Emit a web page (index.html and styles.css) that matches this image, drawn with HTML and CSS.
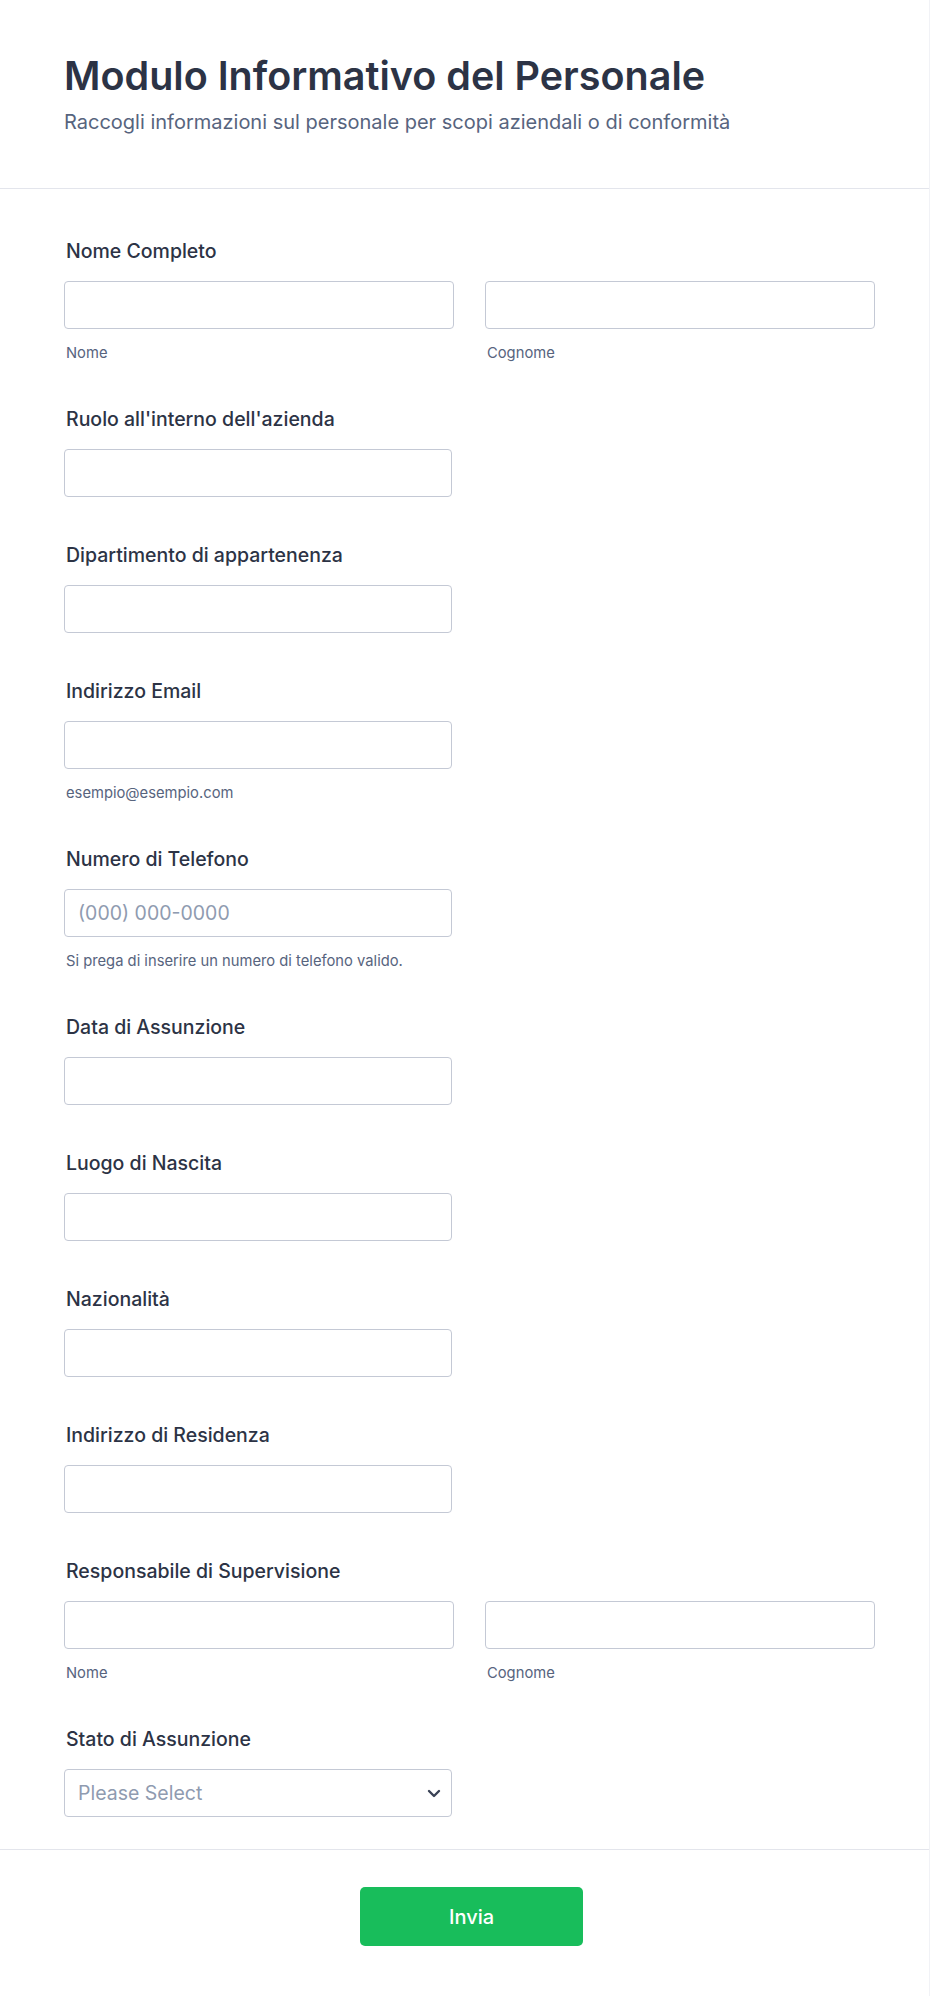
FILE: index.html
```html
<!DOCTYPE html>
<html lang="it">
<head>
<meta charset="utf-8">
<title>Modulo Informativo del Personale</title>
<link rel="stylesheet" href="styles.css">
</head>
<body>
<form class="card">
  <header class="header">
    <h1 class="title">Modulo Informativo del Personale</h1>
    <p class="subtitle">Raccogli informazioni sul personale per scopi aziendali o di conformità</p>
  </header>
  <ul class="fields">
    <li class="field">
      <label class="label">Nome Completo</label>
      <div class="pair">
        <div class="col"><input class="input" type="text"><span class="sub">Nome</span></div>
        <div class="col"><input class="input" type="text"><span class="sub">Cognome</span></div>
      </div>
    </li>
    <li class="field">
      <label class="label">Ruolo all'interno dell'azienda</label>
      <input class="input single" type="text">
    </li>
    <li class="field">
      <label class="label">Dipartimento di appartenenza</label>
      <input class="input single" type="text">
    </li>
    <li class="field">
      <label class="label">Indirizzo Email</label>
      <input class="input single" type="email">
      <span class="sub">esempio@esempio.com</span>
    </li>
    <li class="field">
      <label class="label">Numero di Telefono</label>
      <input class="input single" type="tel" placeholder="(000) 000-0000">
      <span class="sub">Si prega di inserire un numero di telefono valido.</span>
    </li>
    <li class="field">
      <label class="label">Data di Assunzione</label>
      <input class="input single" type="text">
    </li>
    <li class="field">
      <label class="label">Luogo di Nascita</label>
      <input class="input single" type="text">
    </li>
    <li class="field">
      <label class="label">Nazionalità</label>
      <input class="input single" type="text">
    </li>
    <li class="field">
      <label class="label">Indirizzo di Residenza</label>
      <input class="input single" type="text">
    </li>
    <li class="field">
      <label class="label">Responsabile di Supervisione</label>
      <div class="pair">
        <div class="col"><input class="input" type="text"><span class="sub">Nome</span></div>
        <div class="col"><input class="input" type="text"><span class="sub">Cognome</span></div>
      </div>
    </li>
    <li class="field">
      <label class="label">Stato di Assunzione</label>
      <div class="select single">
        <span class="select-text">Please Select</span>
        <svg class="chevron" width="14" height="9" viewBox="0 0 14 9"><polyline points="2,2 7,7 12,2" fill="none" stroke="#3a4255" stroke-width="2.4" stroke-linecap="round" stroke-linejoin="round"/></svg>
      </div>
    </li>
  </ul>
  <footer class="footer">
    <button class="submit" type="button">Invia</button>
  </footer>
</form>
</body>
</html>
```
FILE: styles.css
```css
html, body {
  margin: 0;
  padding: 0;
  background: #ffffff;
}
body {
  font-family: Inter, "Noto Sans", "Liberation Sans", sans-serif;
  color: #2c3345;
}
.card {
  width: 929px;
  min-height: 1996px;
  border-right: 1px solid #f1f2f6;
  background: #ffffff;
}
.header {
  padding: 52px 64px 54px;
  border-bottom: 1px solid #e3e5ec;
}
.title {
  margin: 0 0 10px;
  font-size: 39.5px;
  line-height: 48px;
  font-weight: 600;
  color: #2c3345;
}
.subtitle {
  margin: 0;
  font-size: 20px;
  line-height: 24px;
  color: #57647e;
}
.fields {
  list-style: none;
  margin: 0;
  padding: 27px 0 9px 64px;
  border-bottom: 1px solid #e3e5ec;
}
.field {
  display: flex;
  flex-direction: column;
  align-items: flex-start;
  padding: 23px 0;
  width: 811px;
}
.label {
  font-size: 19.5px;
  line-height: 24px;
  font-weight: 500;
  color: #2c3345;
  margin: 0 0 18px 2px;
}
.pair {
  display: grid;
  grid-template-columns: 390px 390px;
  column-gap: 31px;
  width: 811px;
}
.col {
  display: flex;
  flex-direction: column;
}
.input {
  box-sizing: border-box;
  height: 48px;
  width: 100%;
  margin: 0;
  padding: 0 13px;
  border: 1px solid #c4c9d5;
  border-radius: 4px;
  background: #ffffff;
  font-family: Inter, "Noto Sans", sans-serif;
  font-size: 19.5px;
  color: #2c3345;
  outline: none;
}
.input.single {
  width: 388px;
}
.input::placeholder {
  color: #8f9bb0;
}
.sub {
  margin: 17px 0 0 2px;
  font-size: 14.75px;
  line-height: 15px;
  color: #57647e;
}
.select {
  box-sizing: border-box;
  height: 48px;
  width: 388px;
  padding: 0 10px 0 13px;
  border: 1px solid #c4c9d5;
  border-radius: 4px;
  display: flex;
  align-items: center;
  justify-content: space-between;
}
.select-text {
  font-size: 19.5px;
  color: #8f9bb0;
}
.chevron {
  display: block;
}
.footer {
  display: flex;
  justify-content: center;
  width: 811px;
  padding: 37px 0 0 66px;
}
.submit {
  width: 223px;
  height: 59px;
  border: none;
  border-radius: 5px;
  background: #18bd5b;
  color: #ffffff;
  font-family: Inter, "Noto Sans", sans-serif;
  font-size: 20px;
  font-weight: 500;
  cursor: pointer;
}
```
